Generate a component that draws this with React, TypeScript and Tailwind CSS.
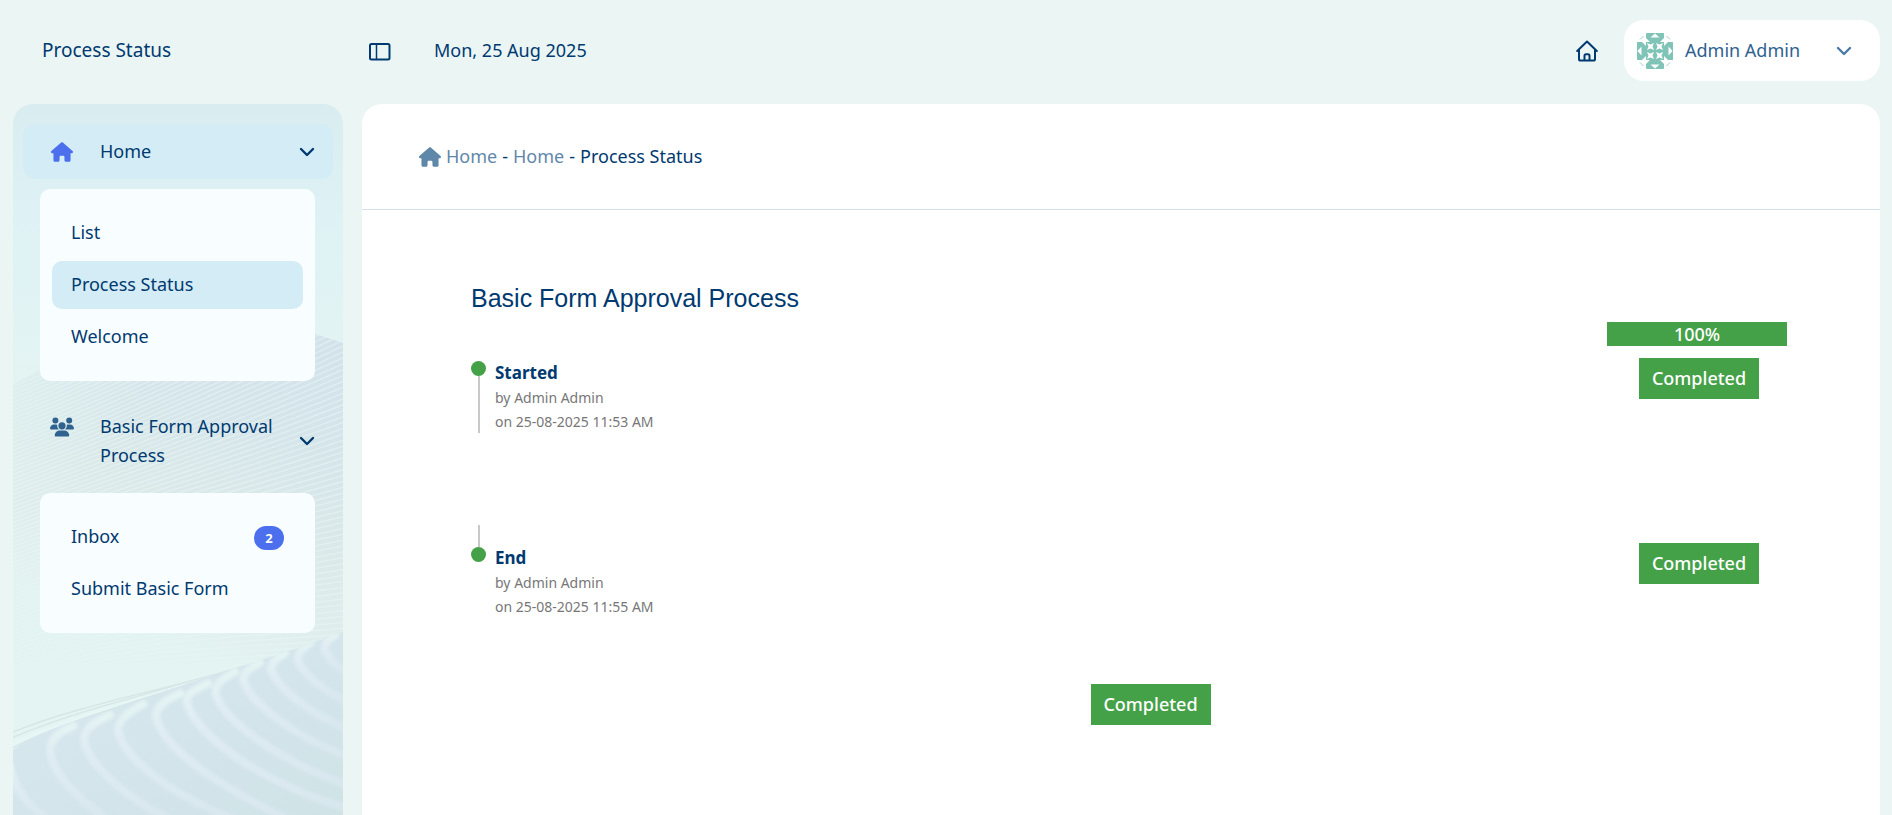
import type { ReactNode } from "react";
import { FaHouse, FaUsers } from "react-icons/fa6";

type MenuItem = {
  label: string;
  active?: boolean;
  badge?: number;
};

type MenuGroup = {
  label: string;
  icon: ReactNode;
  active?: boolean;
  items: MenuItem[];
};

type Step = {
  name: string;
  by: string;
  on: string;
};

const MENU: MenuGroup[] = [
  {
    label: "Home",
    icon: <FaHouse className="h-5 w-[22px] text-[#4b6fed]" />,
    active: true,
    items: [{ label: "List" }, { label: "Process Status", active: true }, { label: "Welcome" }],
  },
  {
    label: "Basic Form Approval Process",
    icon: <FaUsers className="h-5 w-6 text-[#2f628f]" />,
    items: [{ label: "Inbox", badge: 2 }, { label: "Submit Basic Form" }],
  },
];

const START: Step = { name: "Started", by: "Admin Admin", on: "25-08-2025 11:53 AM" };
const END: Step = { name: "End", by: "Admin Admin", on: "25-08-2025 11:55 AM" };

// Ridges of the lower dune
const RIDGES = [
  "M30 500 C40 570 90 620 150 665",
  "M220 378 C170 400 150 420 150 455 C160 530 240 600 330 665",
  "M330 345 C275 370 252 390 252 420 C265 500 390 600 520 665",
  "M430 312 C380 340 354 360 354 392 C372 480 520 590 720 665",
  "M540 280 C490 305 468 320 468 350 C485 440 650 560 880 665",
  "M625 250 C580 270 560 282 560 305 C580 395 760 540 1040 625",
  "M705 215 C665 238 646 252 646 280 C670 360 830 480 1040 555",
  "M780 188 C750 205 730 216 730 243 C755 310 880 410 1040 468",
  "M855 160 C830 175 813 188 813 210 C838 270 930 340 1040 388",
  "M930 130 C908 146 893 158 893 182 C915 230 970 270 1040 306",
  "M1005 105 C985 118 973 130 973 148 C985 175 1010 200 1040 220",
];

const STRIPES = Array.from({ length: 84 }, (_, i) => i);

function Chevron({ className }: { className?: string }) {
  return (
    <svg viewBox="0 0 16 10" className={["h-[10px] w-4 shrink-0", className].join(" ")} fill="none" aria-hidden="true">
      <path d="M2 2l6 6 6-6" stroke="currentColor" strokeWidth="2.4" strokeLinecap="round" strokeLinejoin="round" />
    </svg>
  );
}

function PanelIcon() {
  return (
    <svg viewBox="0 0 22 20" className="h-5 w-[22px]" fill="none" stroke="currentColor" aria-hidden="true">
      <rect x="1" y="3" width="19.500" height="15.500" rx="1.5" strokeWidth="2" />
      <path d="M7.500 3v15.500" strokeWidth="1.5" />
    </svg>
  );
}

function HomeOutline() {
  return (
    <svg
      viewBox="0 0 22 22"
      className="size-[22px]"
      fill="none"
      stroke="currentColor"
      strokeWidth="2"
      strokeLinecap="round"
      strokeLinejoin="round"
      aria-hidden="true"
    >
      <path d="M1.2 11 11 1.5 20.8 11" />
      <path d="M3 10.5V19a1.6 1.6 0 0 0 1.6 1.6h12.8A1.6 1.6 0 0 0 19 19v-8.500" />
      <path d="M8.500 20v-4.200a1.500 1.500 0 0 1 1.500-1.500h2a1.500 1.500 0 0 1 1.500 1.500V20" />
    </svg>
  );
}

function Avatar() {
  const star = "M1 1 L4.500 2.500 L8 1 L6.500 4.500 L8 8 L4.500 6.500 L1 8 L2.500 4.500 Z";
  return (
    <svg viewBox="0 0 36 36" className="size-9 shrink-0" role="img" aria-label="Admin Admin">
      <clipPath id="avatar-clip">
        <rect width="36" height="36" rx="11" />
      </clipPath>
      <g clipPath="url(#avatar-clip)">
        <rect width="36" height="36" fill="#fff" />
        <path d="M9 0h18v9h9v18h-9v9H9v-9H0V9h9z" fill="#80c3b7" />
        <path
          d="M3 6.500 6.500 3M29.500 3 33 6.500M3 29.500 6.500 33M29.500 33 33 29.500"
          stroke="#80c3b7"
          strokeWidth="0.8"
        />
        <g fill="#fff">
          <path d="M13.500 4.500 18 0.500l4.500 4z" />
          <path d="M13.500 31.500 18 35.500l4.500-4z" />
          <path d="M4.500 13.500 0.500 18l4 4.500z" />
          <path d="M31.500 13.500 35.500 18l-4 4.500z" />
          <path d="M9 9V5L13 9zM27 9V5L23 9zM9 27v4L13 27zM27 27v4L23 27z" />
          <path d="M9 9H5L9 13zM27 9h4L27 13zM9 27H5L9 23zM27 27h4L27 23z" />
          <path d={star} transform="translate(9 9)" />
          <path d={star} transform="translate(18 9)" />
          <path d={star} transform="translate(9 18)" />
          <path d={star} transform="translate(18 18)" />
        </g>
      </g>
    </svg>
  );
}

function DuneBackdrop() {
  return (
    <svg
      viewBox="0 0 330 711"
      preserveAspectRatio="xMidYMin slice"
      className="absolute inset-0 -z-10 h-full w-full"
      aria-hidden="true"
    >
      <defs>
        <linearGradient id="sky" x1="0" y1="0" x2="0" y2="1">
          <stop offset="0" stopColor="#d9ecef" />
          <stop offset="0.15" stopColor="#def2f5" />
          <stop offset="0.4" stopColor="#e3f4f2" />
          <stop offset="1" stopColor="#e3f4f2" />
        </linearGradient>
        <linearGradient id="far-dune" x1="1" y1="0" x2="0.65" y2="1">
          <stop offset="0" stopColor="#d1e1ea" />
          <stop offset="0.4" stopColor="#d6e5ea" />
          <stop offset="0.65" stopColor="#dbe9e9" />
          <stop offset="1" stopColor="#e3f3f1" />
        </linearGradient>
        <linearGradient id="far-fade" x1="0" y1="0" x2="0.5" y2="0.2">
          <stop offset="0" stopColor="#e3f4f2" stopOpacity="0.8" />
          <stop offset="1" stopColor="#e3f4f2" stopOpacity="0" />
        </linearGradient>
        <linearGradient id="near-dune" x1="0" y1="0" x2="1" y2="1">
          <stop offset="0" stopColor="#dae8ef" />
          <stop offset="0.5" stopColor="#d4e5ec" />
          <stop offset="1" stopColor="#cfe3e5" />
        </linearGradient>
        <linearGradient id="ridge" x1="0" y1="0" x2="0" y2="1">
          <stop offset="0" stopColor="#e4f4f3" />
          <stop offset="0.3" stopColor="#e0ecf3" />
          <stop offset="1" stopColor="#d8e7ee" />
        </linearGradient>
        <filter id="soft" x="-20%" y="-20%" width="140%" height="140%">
          <feGaussianBlur stdDeviation="4" />
        </filter>
        <clipPath id="far-clip">
          <path d="M0 281 C70 240 190 180 302 230 L330 239 V560 H0Z" />
        </clipPath>
        <clipPath id="near-clip">
          <path d="M39 450 C150 370 300 350 520 265 C640 222 800 180 1029 96 V660 H39Z" />
        </clipPath>
      </defs>
      <rect width="330" height="711" fill="url(#sky)" />
      <g clipPath="url(#far-clip)">
        <rect y="190" width="330" height="370" fill="url(#far-dune)" />
        <g fill="none" stroke="#e8f5f6" strokeOpacity="0.55" strokeWidth="1.5">
          {STRIPES.map((i) => (
            <path key={i} d={`M-10 ${262 + i * 4} C100 ${222 + i * 4} 220 ${145 + i * 5} 345 ${55 + i * 6}`} />
          ))}
        </g>
        <rect y="190" width="330" height="200" fill="url(#far-fade)" />
      </g>
      <g transform="translate(-13 496) scale(0.33333)">
        <g fill="none" strokeWidth="4">
          <path d="M39 396 C250 310 500 270 820 175" stroke="#d6e6e6" />
          <path d="M39 412 C250 325 420 290 760 190" stroke="#d6e6e6" />
          <path d="M39 432 C250 335 420 302 760 195" stroke="#e6f6f5" strokeWidth="12" />
          <path d="M39 444 C170 370 400 310 700 208" stroke="#d3e3e4" />
        </g>
        <g clipPath="url(#near-clip)">
          <rect x="39" y="90" width="1000" height="570" fill="url(#near-dune)" />
          <g fill="none" filter="url(#soft)" stroke="url(#ridge)" strokeLinecap="round">
            {RIDGES.map((d) => (
              <path key={d} d={d} strokeWidth="24" />
            ))}
          </g>
        </g>
      </g>
    </svg>
  );
}

function SidebarGroup({ group }: { group: MenuGroup }) {
  return (
    <li>
      <button
        type="button"
        aria-expanded="true"
        className={[
          "flex w-full items-start rounded-xl py-[13px] pr-[18px] pl-[27px] text-left",
          group.active ? "bg-[#d3ecf6]" : "",
        ].join(" ")}
      >
        <span className="flex h-[29px] w-6 shrink-0 items-center justify-center">{group.icon}</span>
        <span className="ml-[26px] flex-1 text-[18px] leading-[29px]">{group.label}</span>
        <Chevron className="self-center" />
      </button>
      <ul className="mr-[18px] mt-[10px] ml-[17px] flex flex-col gap-1 rounded-[10px] bg-[#f8fdff] px-3 py-5">
        {group.items.map((item) => (
          <li key={item.label}>
            <a
              href="#"
              className={[
                "flex h-12 items-baseline justify-between rounded-[10px] px-[19px] pt-[9px] text-[18px] leading-[28px]",
                item.active ? "bg-[#d3ecf6]" : "",
              ].join(" ")}
            >
              {item.label}
              {item.badge != null && (
                <span className="h-6 w-[30px] rounded-full bg-[#4b6fed] text-center text-[13px] leading-6 font-bold text-white">
                  {item.badge}
                </span>
              )}
            </a>
          </li>
        ))}
      </ul>
    </li>
  );
}

function StepText({ step }: { step: Step }) {
  return (
    <div className="pl-[9px] text-sm leading-6 text-[#777]">
      <h3 className="text-[17px] leading-[26px] font-bold text-[#003a70]">{step.name}</h3>
      <p>by {step.by}</p>
      <p>on {step.on}</p>
    </div>
  );
}

function Completed() {
  return (
    <span className="flex h-[41px] w-[120px] items-center justify-center bg-[#45a148] text-[18px] font-medium text-white">
      Completed
    </span>
  );
}

export default function App() {
  return (
    <div className="flex min-h-screen flex-col bg-[#ebf5f4] pr-3 pl-[13px] font-['Noto_Sans',sans-serif] text-[18px] text-[#003a70]">
      <header className="flex h-[104px] items-center pb-[3px]">
        <h1 className="w-[349px] pl-[29px] text-[19px]">Process Status</h1>
        <button type="button" aria-label="Toggle sidebar" className="ml-[7px]">
          <PanelIcon />
        </button>
        <time dateTime="2025-08-25" className="ml-[43px]">
          Mon, 25 Aug 2025
        </time>
        <a href="#" aria-label="Home" className="mr-[26px] ml-auto">
          <HomeOutline />
        </a>
        <button
          type="button"
          className="flex h-[61px] w-64 items-center rounded-[20px] bg-white pr-7 pl-[13px] text-[#2f628f]"
        >
          <Avatar />
          <span className="ml-3 flex-1 text-left">Admin Admin</span>
          <Chevron className="text-[#4a7aa5]" />
        </button>
      </header>

      <div className="flex flex-1 gap-[19px]">
        <aside className="relative isolate w-[330px] shrink-0 overflow-hidden rounded-t-[20px] px-[10px] pt-5 pb-8">
          <DuneBackdrop />
          <nav aria-label="Main">
            <ul className="flex flex-col gap-[18px]">
              {MENU.map((group) => (
                <SidebarGroup key={group.label} group={group} />
              ))}
            </ul>
          </nav>
        </aside>

        <main className="flex-1 rounded-t-[20px] bg-white">
          <nav
            aria-label="Breadcrumb"
            className="flex h-[106px] items-center gap-[5px] border-b border-[#d5e0e8] pl-[57px]"
          >
            <FaHouse className="h-5 w-[22px] text-[#5f87aa]" />
            <a href="#" className="text-[#5f87aa]">
              Home
            </a>
            <span>-</span>
            <a href="#" className="text-[#5f87aa]">
              Home
            </a>
            <span>-</span>
            <span aria-current="page">Process Status</span>
          </nav>

          <section className="flex flex-col pt-[72px] pr-[50px] pb-10 pl-[109px]">
            <h2 className="font-['Liberation_Sans',sans-serif] text-[25px] leading-8">Basic Form Approval Process</h2>

            <div className="mt-2 flex w-[266px] justify-center self-end">
              <div
                role="progressbar"
                aria-label="Progress"
                aria-valuenow={100}
                aria-valuemin={0}
                aria-valuemax={100}
                className="h-6 w-[180px] bg-[#45a148] text-center text-[18px] leading-6 font-medium text-white"
              >
                100%
              </div>
            </div>

            <div className="mt-3 flex items-start">
              <div className="flex w-[15px] flex-col items-center pt-[3px]">
                <span className="size-[15px] rounded-full bg-[#45a148]" />
                <span className="h-[57px] w-0.5 bg-[#c8c8c8]" />
              </div>
              <div className="flex-1 pt-0.5">
                <StepText step={START} />
              </div>
              <div className="flex w-[262px] justify-center">
                <Completed />
              </div>
            </div>

            <div className="mt-[91px] flex items-start">
              <div className="flex w-[15px] flex-col items-center">
                <span className="h-[22px] w-0.5 bg-[#c8c8c8]" />
                <span className="size-[15px] rounded-full bg-[#45a148]" />
              </div>
              <div className="flex-1 pt-5">
                <StepText step={END} />
              </div>
              <div className="flex w-[262px] justify-center pt-[18px]">
                <Completed />
              </div>
            </div>

            <div className="mt-[65px] flex justify-center">
              <Completed />
            </div>
          </section>
        </main>
      </div>
    </div>
  );
}
